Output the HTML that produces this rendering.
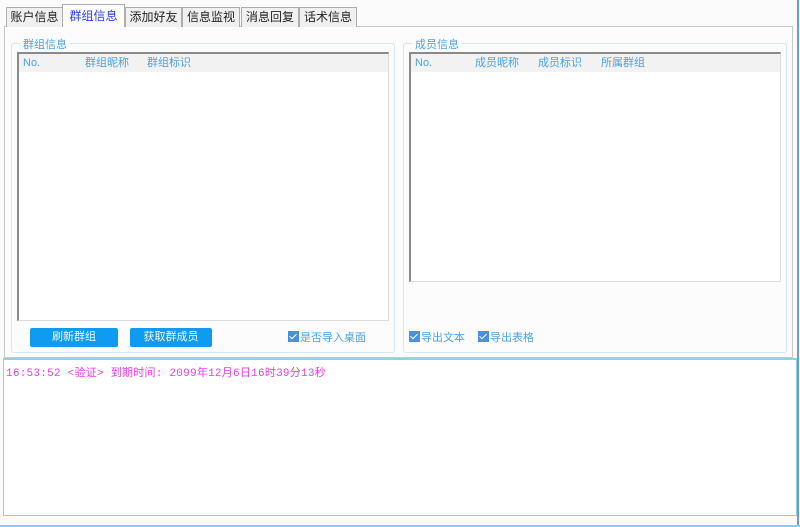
<!DOCTYPE html>
<html><head><meta charset="utf-8"><style>
*{margin:0;padding:0;box-sizing:border-box}
body{width:800px;height:527px;background:#fbfbfb;position:relative;overflow:hidden;font-family:"Liberation Sans","Noto Sans CJK SC",sans-serif;font-size:12px}
.a{position:absolute}
.tab{position:absolute;top:7px;height:20px;border:1px solid #adadad;border-bottom:none;background:#f0f0f0;color:#222;text-align:center;line-height:19px;font-size:12px}
.grp{position:absolute;border:1px solid #d6e6f2;border-radius:3px;background:#fcfcfc}
.lg{position:absolute;top:-8px;left:8px;background:#fcfcfc;color:#4aa3e8;padding:0 3px;font-size:11px}
.lv{position:absolute;background:#fff;border:1px solid #dcdcdc;border-top:2px solid #8a8a8a;border-left:2px solid #8a8a8a}
.hd{position:absolute;left:0;right:0;top:0;height:18px;background:#f2f2f2;color:#4aa3e8;font-size:11px;line-height:18px}
.hd span{position:absolute}
.btn{position:absolute;height:19px;background:#0f9cf0;color:#eef8ff;border-radius:2px;text-align:center;line-height:19px;font-size:11px}
.cb{position:absolute;color:#4aa3e8;font-size:11px;line-height:13px}
.cb i{display:inline-block;width:11px;height:11px;background:#4a90e2;vertical-align:-1px;margin-right:1px;position:relative}
.cb i:after{content:"";position:absolute;left:3px;top:1px;width:3px;height:6px;border:solid #fff;border-width:0 1px 1px 0;transform:rotate(45deg)}
</style></head><body>
<div class="a" style="left:4px;top:26px;width:789px;height:332px;border:1px solid #c8c8c8;background:#fcfcfc"></div>
<div class="tab" style="left:6px;width:57px">账户信息</div>
<div class="tab" style="left:62px;top:4px;height:23px;width:63px;background:#fcfcfc;color:#2a3fe0;line-height:22px">群组信息</div>
<div class="tab" style="left:125px;width:57px">添加好友</div>
<div class="tab" style="left:182px;width:58px">信息监视</div>
<div class="tab" style="left:241px;width:58px">消息回复</div>
<div class="tab" style="left:299px;width:58px">话术信息</div>
<div class="a" style="left:797px;top:0;width:2px;height:527px;background:#6b9ad8"></div>

<div class="grp" style="left:11px;top:43px;width:384px;height:310px">
<div class="lg">群组信息</div>
<div class="lv" style="left:5px;top:8px;width:372px;height:269px"><div class="hd"><span style="left:4px">No.</span><span style="left:66px">群组昵称</span><span style="left:128px">群组标识</span></div></div>
<div class="btn" style="left:18px;top:284px;width:88px">刷新群组</div>
<div class="btn" style="left:118px;top:284px;width:82px">获取群成员</div>
<div class="cb" style="left:276px;top:287px"><i></i>是否导入桌面</div>
</div>

<div class="grp" style="left:403px;top:43px;width:384px;height:310px">
<div class="lg">成员信息</div>
<div class="lv" style="left:5px;top:8px;width:372px;height:230px"><div class="hd"><span style="left:4px">No.</span><span style="left:64px">成员昵称</span><span style="left:127px">成员标识</span><span style="left:190px">所属群组</span></div></div>
<div class="cb" style="left:5px;top:287px"><i></i>导出文本</div>
<div class="cb" style="left:74px;top:287px"><i></i>导出表格</div>
</div>

<div class="a" style="left:3px;top:358px;width:794px;height:158px;border:1px solid #8fd0ee;border-top:2px solid #8fd0ee;background:#fff"></div>
<div class="a" style="left:6px;top:364px;color:#e83ee8;font-family:'Liberation Mono','Noto Sans CJK SC',monospace;font-size:11px;letter-spacing:0.25px">16:53:52 &lt;验证&gt; 到期时间: 2099年12月6日16时39分13秒</div>
<div class="a" style="left:0;top:525px;width:800px;height:2px;background:#8fc7ee"></div>
</body></html>
